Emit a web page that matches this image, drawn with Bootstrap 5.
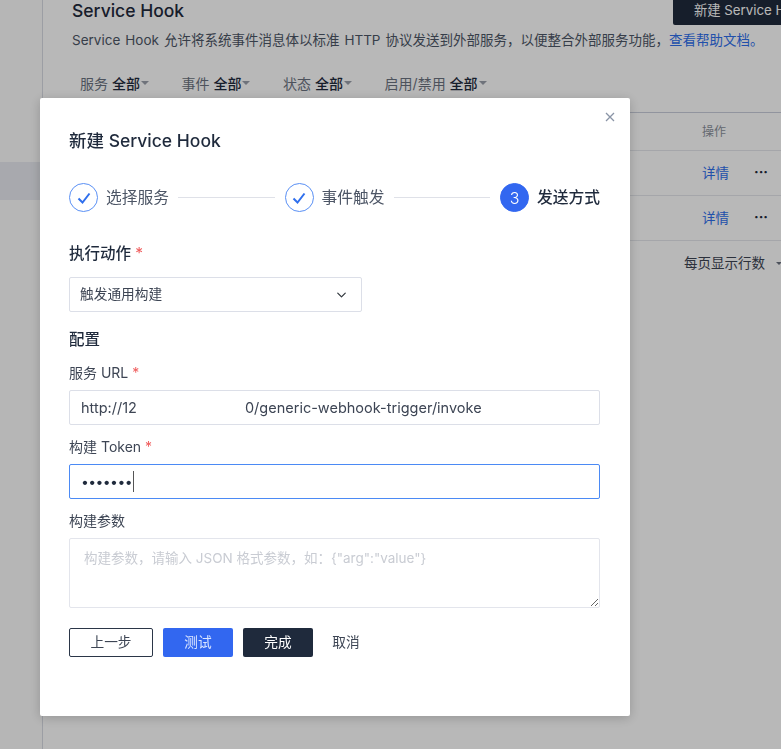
<!DOCTYPE html>
<html lang="zh-CN">
<head>
    <meta charset="utf-8">
    <title>新建 Service Hook</title>
    <link href="https://cdn.jsdelivr.net/npm/bootstrap@5.3.3/dist/css/bootstrap.min.css" rel="stylesheet">
    <style>
        html, body { height: 749px; overflow: hidden; }
        body {
            font-family: Inter, "Noto Sans CJK SC", sans-serif;
            font-size: 14px;
            color: #1f2a3c;
            background: #fff;
        }
        .page-wrap { height: 749px; }
        .side-rail { width: 43px; flex: none; border-right: 1px solid #d8dbe3; background: #fcfcfd; padding-top: 162px; }
        .side-active { height: 38px; background: #e9ebf1; }
        .main-area { min-width: 0; flex: 1; overflow: hidden; padding: 0 0 0 29px; margin-top: -11px; }
        .head-row { height: 37px; }
        .page-title { font-size: 17.5px; font-weight: 500; margin: 0; padding-top: 11px; }
        .new-btn {
            background: #1f2a3c; color: #fff; border: 0; border-radius: 2px; font-size: 13.3px;
            flex: none; width: 140px; height: 28px; margin: 8px -32px 0 0; white-space: nowrap;
            text-align: left; padding-left: 21px;
        }
        .page-desc { color: #4d5666; margin: 4px 0 0; white-space: nowrap; font-size: 13.5px; word-spacing: 1.2px; }
        .page-desc a { color: #2f6fed; text-decoration: none; }
        .filter-row { margin: 23px 0 0 8px; height: 20px; color: #6b7280; white-space: nowrap; column-gap: 32.6px; }
        .filter-row b { font-weight: 500; color: #1f2a3c; }
        .filter-item { display: flex; align-items: center; }
        .filter-caret { width: 0; height: 0; border: 4px solid transparent; border-top: 4px solid #9aa0ab; border-bottom: 0; margin-left: 1px; }
        .table-zone { margin: 19px 0 0 -29px; border-top: 1px solid #c9cedb; }
        .table-line { height: 45px; border-bottom: 1px solid #e5e7ec; padding-bottom: 2px; }
        .table-head { height: 38px; color: #8b919c; font-size: 12px; padding-bottom: 0; }
        .op-cell { width: 52px; flex: none; }
        .more-cell { width: 27px; flex: none; font-size: 14px; font-weight: 700; line-height: 1; color: #1f2a3c; }
        .detail-link { color: #2f6fed; text-decoration: none; font-size: 13.5px; }
        .pager-row { margin-top: 12px; padding-left: 612px; white-space: nowrap; color: #3d4554; font-size: 13.5px; display: flex; align-items: center; }
        .pager-caret { width: 0; height: 0; border: 3px solid transparent; border-top: 3px solid #6b7280; border-bottom: 0; margin-left: 11px; flex: none; }

        .page-shade { position: fixed; inset: 0; background: rgba(0,0,0,.28); z-index: 1050; }
        .hook-dialog { max-width: 590px; width: 590px; margin: 98px 0 0 40px; }
        .hook-content {
            height: 618px; border: 0; border-radius: 2px;
            box-shadow: 0 2px 12px rgba(0,0,0,.2); color: #1f2a3c;
        }
        .hook-body { padding: 32px 30px 0 29px; }
        .hook-close {
            position: absolute; top: 12px; right: 13px; width: 14px; height: 14px;
            padding: 0; border: 0; background: none; line-height: 0;
        }
        .hook-title { font-size: 17.5px; font-weight: 500; line-height: 22px; margin: 0; }
        .step-row { margin-top: 31px; height: 29px; }
        .step-dot {
            width: 29px; height: 29px; flex: none; border-radius: 50%;
            border: 1px solid #5a90f5; display: flex; align-items: center; justify-content: center;
        }
        .step-dot-on { background: #3267f0; border-color: #3267f0; color: #fff; font-size: 16px; font-weight: 300; }
        .step-name { font-size: 15.75px; color: #4d5666; margin-left: 8px; flex: none; line-height: 31px; }
        .step-name-on { color: #1f2a3c; font-weight: 500; }
        .step-line { flex: 1; height: 1px; background: #dfe1e8; margin: 0 10px 1px 9px; }
        .group-label { font-size: 15.5px; font-weight: 500; margin: 0; line-height: 22px; }
        .req { color: #ef5b5b; font-weight: 400; }
        .action-label { margin-top: 31px; }
        .hook-select {
            width: 293px; height: 35px; margin-top: 12px; font-size: 13.7px; color: #3d4554;
            padding: 0 30px 0 10px; border: 1px solid #dcdfe8; border-radius: 2px;
            background-position: right 13px center; background-size: 13px 10px;
        }
        .config-label { margin-top: 17px; }
        .field-label { font-size: 14px; color: #3d4554; margin: 13px 0 0; line-height: 18px; display: block; }
        .field-box {
            height: 35px; margin-top: 8px; font-size: 14.5px; color: #3d4554; padding: 0 10px 0 11px;
            border: 1px solid #dcdfe8; border-radius: 2px;
        }
        .url-gap { width: 108px; flex: none; }
        .form-control.field-token { border: 1px solid #4b8af5; }
        .token-dots { font-size: 14px; letter-spacing: -.6px; color: #1f2a3c; line-height: 1; }
        .token-caret { width: 1.5px; height: 21px; background: #555; margin-left: 1px; }
        .field-params { margin-top: 13px; }
        .hook-area {
            height: 70px; margin-top: 8px; font-size: 13.5px; padding: 9px 14px;
            border: 1px solid #e3e5ec; border-radius: 2px; color: #3d4554;
        }
        .hook-area::placeholder { color: #c9ccd3; }
        .foot-row { margin-top: 20px; }
        .foot-btn { height: 29px; width: 70px; padding: 0; font-size: 13.7px; border-radius: 2px; border: 1px solid transparent; }
        .foot-prev { width: 84px; background: #fff; border-color: #2b3648; color: #3d4554; }
        .foot-test { background: #3267f0; color: #dbe6ff; margin-left: 10px; }
        .foot-done { background: #1f2a3c; color: #fff; margin-left: 10px; }
        .foot-cancel { background: none; color: #3d4554; margin-left: -2px; }
    </style>
</head>
<body>

<div class="d-flex page-wrap">
    <div class="side-rail"><div class="side-active"></div></div>
    <div class="main-area">
        <div class="d-flex justify-content-between align-items-start head-row">
            <h1 class="page-title">Service Hook</h1>
            <button class="new-btn" type="button">新建 Service Hook</button>
        </div>
        <p class="page-desc">Service Hook 允许将系统事件消息体以标准 HTTP 协议发送到外部服务，以便整合外部服务功能，<a href="#">查看帮助文档。</a></p>
        <div class="d-flex filter-row">
            <div class="filter-item"><span>服务 <b>全部</b></span><i class="filter-caret"></i></div>
            <div class="filter-item"><span>事件 <b>全部</b></span><i class="filter-caret"></i></div>
            <div class="filter-item"><span>状态 <b>全部</b></span><i class="filter-caret"></i></div>
            <div class="filter-item"><span>启用/禁用 <b>全部</b></span><i class="filter-caret"></i></div>
        </div>
        <div class="table-zone">
            <div class="d-flex justify-content-end align-items-center table-line table-head">
                <div class="op-cell">操作</div><div class="more-cell"></div>
            </div>
            <div class="d-flex justify-content-end align-items-center table-line">
                <div class="op-cell"><a class="detail-link" href="#">详情</a></div><div class="more-cell">···</div>
            </div>
            <div class="d-flex justify-content-end align-items-center table-line">
                <div class="op-cell"><a class="detail-link" href="#">详情</a></div><div class="more-cell">···</div>
            </div>
        </div>
        <div class="pager-row"><span>每页显示行数</span><i class="pager-caret"></i></div>
    </div>
</div>

<div class="page-shade"></div>
<div class="modal d-block" tabindex="-1" role="dialog" aria-modal="true">
    <div class="modal-dialog hook-dialog">
        <div class="modal-content hook-content">
            <button class="hook-close" type="button" aria-label="Close">
                <svg width="14" height="14" viewBox="0 0 14 14"><path d="M3 3l8 8M11 3l-8 8" stroke="#8a94a6" stroke-width="1.3" fill="none"/></svg>
            </button>
            <div class="modal-body hook-body">
                <h2 class="hook-title">新建 Service Hook</h2>

                <div class="d-flex align-items-center step-row">
                    <span class="step-dot">
                        <svg width="16" height="14" viewBox="0 0 16 14"><path d="M2.5 7.5l4 4 7-9" stroke="#2f6fed" stroke-width="2" fill="none"/></svg>
                    </span>
                    <span class="step-name">选择服务</span>
                    <span class="step-line"></span>
                    <span class="step-dot">
                        <svg width="16" height="14" viewBox="0 0 16 14"><path d="M2.5 7.5l4 4 7-9" stroke="#2f6fed" stroke-width="2" fill="none"/></svg>
                    </span>
                    <span class="step-name">事件触发</span>
                    <span class="step-line"></span>
                    <span class="step-dot step-dot-on">3</span>
                    <span class="step-name step-name-on">发送方式</span>
                </div>

                <p class="group-label action-label">执行动作 <span class="req">*</span></p>
                <select class="form-select hook-select">
                    <option>触发通用构建</option>
                </select>

                <p class="group-label config-label">配置</p>

                <label class="field-label">服务 URL <span class="req">*</span></label>
                <div class="form-control field-box d-flex align-items-center">
                    <span>http://12</span><span class="url-gap"></span><span>0/generic-webhook-trigger/invoke</span>
                </div>

                <label class="field-label">构建 Token <span class="req">*</span></label>
                <div class="form-control field-box field-token d-flex align-items-center">
                    <span class="token-dots">•••••••</span><span class="token-caret"></span>
                </div>

                <label class="field-label field-params">构建参数</label>
                <textarea class="form-control hook-area" placeholder="构建参数，请输入 JSON 格式参数，如：{&quot;arg&quot;:&quot;value&quot;}"></textarea>

                <div class="d-flex align-items-center foot-row">
                    <button class="foot-btn foot-prev" type="button">上一步</button>
                    <button class="foot-btn foot-test" type="button">测试</button>
                    <button class="foot-btn foot-done" type="button">完成</button>
                    <button class="foot-btn foot-cancel" type="button">取消</button>
                </div>
            </div>
        </div>
    </div>
</div>

<script src="https://cdn.jsdelivr.net/npm/bootstrap@5.3.3/dist/js/bootstrap.bundle.min.js"></script>
</body>
</html>
